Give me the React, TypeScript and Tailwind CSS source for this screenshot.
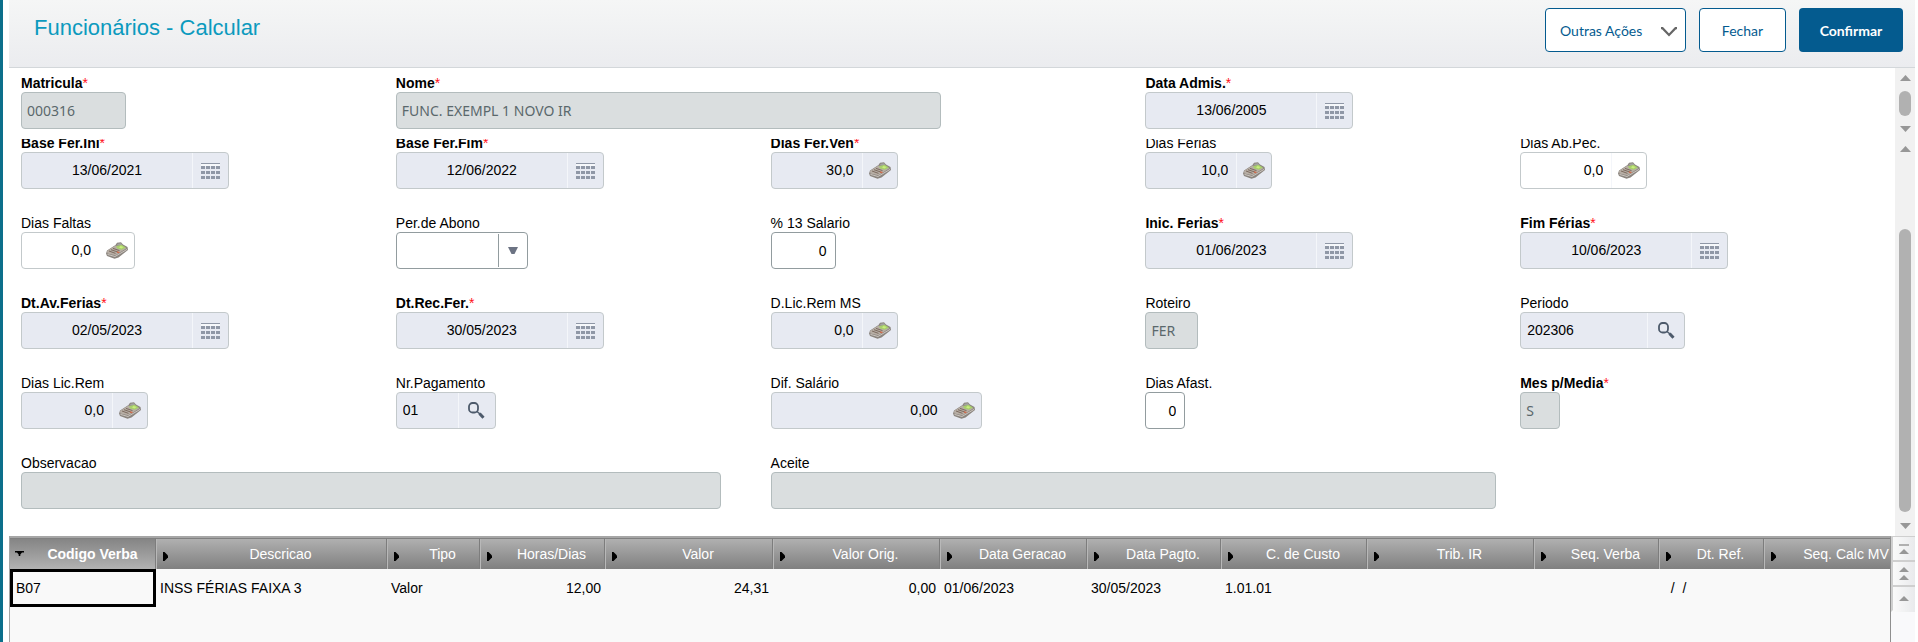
import type { ReactNode } from "react";
import clsx from "clsx";

type FieldProps = {
  id: string;
  label: string;
  required?: boolean;
  className?: string;
  children: ReactNode;
};

function Field({ id, label, required, className, children }: FieldProps) {
  return (
    <div className={className}>
      <label htmlFor={id} className={clsx("block h-5 leading-[22px] whitespace-nowrap", required && "font-bold")}>
        {label}
        {required && <span className="font-normal text-[#ff1018]">*</span>}
      </label>
      {children}
    </div>
  );
}

function CalendarIcon() {
  return (
    <svg width="19" height="16" viewBox="0 0 19 16" fill="#8f97a6" shapeRendering="crispEdges">
      <rect width="19" height="1" />
      <rect y="1" width="19" height="2" fill="#f6f8fb" />
      {[3, 8, 13].map((y) => [0, 5, 10, 15].map((x) => <rect key={`${x}-${y}`} x={x} y={y} width="4" height="3" />))}
    </svg>
  );
}

function CalculatorIcon() {
  return (
    <svg width="22" height="17" viewBox="0 0 22 17">
      <path d="M0 11.5 1 8.5 9.5 3 11 .8 15 .3 17 2.5 21.5 5 22 8 12.5 15.5 8.5 16.8 1 14z" fill="#8b857f" />
      <path d="M1 9 9.5 3.5 20.5 6.2 9.5 13.3 1.5 11.5z" fill="#b7aea5" />
      <path d="M11.5 1.8 15 1.3 16.5 3.2 11 3.6z" fill="#a3a3a1" />
      <path d="M10 4.2 15.5 2.8 20 5.6 15.8 7.8 11.2 6.4z" fill="#a9cf6c" />
      <path d="M14.5 4 17.5 5 15.5 6.4 13 5.6z" fill="#c8ef7c" />
      <path d="m3 9 6.5 2.4M5 7.7l7 2.4M7 6.4l6.5 2.2" stroke="#7c6a5e" strokeWidth="1" />
      <path d="m11 10 2.5.6" stroke="#cf6a4c" strokeWidth="1.4" />
      <path d="m1.5 12.4 7.5 2.1L21 7.4" stroke="#d2ccc5" strokeWidth=".9" fill="none" />
    </svg>
  );
}

function SearchIcon() {
  return (
    <svg width="17" height="17" viewBox="0 0 17 17" fill="none" stroke="#4d5a6b">
      <rect x="1" y="1" width="9" height="9.5" rx="3.6" strokeWidth="1.8" />
      <path d="m9 9.5 3 2.5" strokeWidth="1.6" />
      <path d="m11.5 11.5 4 4.2" strokeWidth="3" />
    </svg>
  );
}

const box = "flex h-[37px] overflow-hidden rounded border border-[#c3c9cb]";

type InputProps = { id: string; value: string; width: string; white?: boolean; plain?: boolean };

function DateInput({ id, value }: { id: string; value: string }) {
  return (
    <div className={clsx(box, "w-[208px] bg-[#e7eaf2]")}>
      <input id={id} defaultValue={value} className="min-w-0 flex-1 text-center outline-none" />
      <button aria-label="Calendário" className="flex w-9 items-center justify-center border-l border-[#f4f6fa]">
        <CalendarIcon />
      </button>
    </div>
  );
}

function NumberInput({ id, value, width, white, plain }: InputProps) {
  return (
    <div className={clsx(box, width, white ? "bg-white" : "bg-[#e7eaf2]")}>
      <input id={id} defaultValue={value} className="min-w-0 flex-1 pr-2 text-right outline-none" />
      <button
        aria-label="Calculadora"
        className={clsx("flex w-[35px] items-center justify-center border-l", plain ? "border-transparent" : "border-[#f4f6fa]")}
      >
        <CalculatorIcon />
      </button>
    </div>
  );
}

function LookupInput({ id, value, width }: InputProps) {
  return (
    <div className={clsx(box, width, "bg-[#e7eaf2]")}>
      <input id={id} defaultValue={value} className="min-w-0 flex-1 pl-1.5 outline-none" />
      <button aria-label="Pesquisar" className="flex w-[37px] items-center justify-center border-l border-[#f4f6fa]">
        <SearchIcon />
      </button>
    </div>
  );
}

function DisabledInput({ id, value, width }: InputProps) {
  return (
    <input
      id={id}
      disabled
      value={value}
      className={clsx(
        "block h-[37px] rounded border border-[#b3bcbd] bg-[#dadedf] px-[5px] font-['Noto_Sans',sans-serif] text-[#5a686c]",
        width
      )}
    />
  );
}

function TextInput({ id, value, width }: InputProps) {
  return (
    <input
      id={id}
      defaultValue={value}
      className={clsx("block h-[37px] rounded border border-[#929c9f] bg-white px-2 text-right outline-none", width)}
    />
  );
}

function Triangle({ down, small }: { down?: boolean; small?: boolean }) {
  return (
    <svg width={small ? 10 : 11} height={small ? 5 : 6} viewBox="0 0 10 6" preserveAspectRatio="none" fill="#979797">
      <path d={down ? "M0 0h10L5 6z" : "M0 6h10L5 0z"} />
    </svg>
  );
}

function Scrollbar({ track }: { track: string }) {
  return (
    <div className="flex w-5 shrink-0 flex-col bg-[#f1f1f1]">
      <button aria-label="Rolar para cima" className="flex h-5 items-center justify-center">
        <Triangle />
      </button>
      <div className={clsx("flex flex-1 justify-center", track)}>
        <div className="w-3 rounded-md bg-[#b1b1b1]" />
      </div>
      <button aria-label="Rolar para baixo" className="flex h-5 items-center justify-center">
        <Triangle down />
      </button>
    </div>
  );
}

const columns = [
  { title: "Codigo Verba", value: "B07", width: "w-[146px]" },
  { title: "Descricao", value: "INSS FÉRIAS FAIXA 3", width: "w-[231px]" },
  { title: "Tipo", value: "Valor", width: "w-[93px]" },
  { title: "Horas/Dias", value: "12,00", width: "w-[125px]", right: true },
  { title: "Valor", value: "24,31", width: "w-[168px]", right: true },
  { title: "Valor Orig.", value: "0,00", width: "w-[167px]", right: true },
  { title: "Data Geracao", value: "01/06/2023", width: "w-[147px]" },
  { title: "Data Pagto.", value: "30/05/2023", width: "w-[134px]" },
  { title: "C. de Custo", value: "1.01.01", width: "w-[146px]" },
  { title: "Trib. IR", value: "", width: "w-[167px]" },
  { title: "Seq. Verba", value: "", width: "w-[125px]" },
  { title: "Dt. Ref.", value: "  /  /", width: "w-[105px]" },
  { title: "Seq. Calc MV", value: "", width: "w-[146px]" },
];

function Grid() {
  return (
    <div className="min-w-0 flex-1 overflow-hidden border-t-2 border-r border-l border-t-[#a6a6a6] border-r-[#8f8f8f] border-l-[#a6a6a6] bg-[#f9f9f9]">
      <table className="w-max table-fixed border-separate border-spacing-0">
        <thead>
          <tr className="text-white">
            {columns.map((c, i) => (
              <th
                key={c.title}
                className={clsx(
                  "border-t border-t-[#808080] border-r border-r-[#7d7d7d] bg-linear-to-b p-0",
                  i === 0 ? "from-[#858585] to-[#b2b2b2] font-bold" : "from-[#b0b0b0] to-[#808080] font-normal",
                  c.width
                )}
              >
                <div className={clsx("flex h-[30px] items-center pl-[5px]", i > 0 && "border-l border-[#b8b8b8]")}>
                  {i === 0 ? (
                    <svg width="9" height="6" viewBox="0 0 9 6">
                      <path d="M0 0h9v1.6H7L5.3 3.5V5H3.7V3.5L2 1.6H0z" />
                    </svg>
                  ) : (
                    <svg width="7" height="9" viewBox="0 0 7 9" className="mt-1">
                      <path d="M1 0h1.5L6 3.6v1.8L2.5 9H1z" />
                    </svg>
                  )}
                  <span className="flex-1 pl-1.5 text-center whitespace-nowrap">{c.title}</span>
                </div>
              </th>
            ))}
          </tr>
        </thead>
        <tbody>
          <tr>
            {columns.map((c, i) => (
              <td key={c.title} className="p-0">
                <div
                  className={clsx(
                    "flex h-[38px] items-center whitespace-pre",
                    i === 0 ? "border-[3px] border-black pl-[3px]" : "px-1",
                    c.right && "justify-end"
                  )}
                >
                  {c.value}
                </div>
              </td>
            ))}
          </tr>
        </tbody>
      </table>
    </div>
  );
}

const navButton =
  "flex h-[25px] flex-col items-center justify-center gap-[3px] border-b-2 border-l-2 border-[#cfcfcf] bg-linear-to-r from-[#fafafa] to-[#e9eaec]";

export default function App() {
  return (
    <div className="flex min-h-screen flex-col border-l-[3px] border-[#0c6f8b] bg-white pr-[3px] pl-1.5 font-['Liberation_Sans',Arial,sans-serif] text-[14px] text-black">
      <header className="flex h-[68px] items-start border-b border-[#d3d7da] bg-linear-to-b from-[#f5f6f6] to-[#ebecef] pt-2 pr-3 pl-[25px]">
        <h1 className="flex-1 pt-1 text-[22px] leading-[32px] text-[#0c9abe]">Funcionários - Calcular</h1>
        <div className="flex gap-[13px] font-[Lato,sans-serif] text-[#045b8f]">
          <button className="flex h-11 w-[141px] items-center justify-between rounded border border-[#045b8f] bg-white pr-[7px] pl-3.5 whitespace-nowrap">
            Outras Ações
            <svg width="18" height="10" viewBox="0 0 18 10" fill="none" stroke="#666" strokeWidth="2.2" className="mt-1">
              <path d="M1 1.2h1.5L9 8l6.500-6.800H17" />
            </svg>
          </button>
          <button className="h-11 w-[87px] rounded border border-[#045b8f] bg-white">Fechar</button>
          <button className="h-11 w-[104px] rounded bg-[#045b8f] font-bold text-white">Confirmar</button>
        </div>
      </header>

      <section className="flex">
        <div className="grid flex-1 grid-cols-5 pt-1 pb-2.5 pl-3">
          <Field id="matricula" label="Matricula" required>
            <DisabledInput id="matricula" value="000316" width="w-[105px]" />
          </Field>
          <Field id="nome" label="Nome" required className="col-span-2">
            <DisabledInput id="nome" value="FUNC. EXEMPL 1 NOVO IR" width="w-[545px]" />
          </Field>
          <Field id="admissao" label="Data Admis." required>
            <DateInput id="admissao" value="13/06/2005" />
          </Field>
        </div>
        <Scrollbar track="py-[3px]" />
      </section>

      <section className="flex overflow-hidden">
        <div className="-mt-[7px] grid flex-1 grid-cols-5 gap-y-[23px] pb-[27px] pl-3">
          <Field id="baseIni" label="Base Fer.Ini" required>
            <DateInput id="baseIni" value="13/06/2021" />
          </Field>
          <Field id="baseFim" label="Base Fer.Fim" required>
            <DateInput id="baseFim" value="12/06/2022" />
          </Field>
          <Field id="diasVen" label="Dias Fer.Ven" required>
            <NumberInput id="diasVen" value="30,0" width="w-[127px]" />
          </Field>
          <Field id="diasFerias" label="Dias Ferias">
            <NumberInput id="diasFerias" value="10,0" width="w-[127px]" />
          </Field>
          <Field id="diasAbono" label="Dias Ab.Pec.">
            <NumberInput id="diasAbono" value="0,0" width="w-[127px]" white />
          </Field>

          <Field id="diasFaltas" label="Dias Faltas">
            <NumberInput id="diasFaltas" value="0,0" width="w-[114px]" white plain />
          </Field>
          <Field id="perAbono" label="Per.de Abono">
            <div className="flex h-[37px] w-[132px] rounded border border-[#929c9f] bg-white">
              <select id="perAbono" className="min-w-0 flex-1 appearance-none pl-1.5 outline-none">
                <option></option>
              </select>
              <span className="pointer-events-none my-px flex w-[29px] items-center justify-center border-l border-[#929c9f]">
                <svg width="10" height="7" viewBox="0 0 10 7" fill="#6c7383">
                  <path d="M0 0h10L6.5 7h-3z" />
                </svg>
              </span>
            </div>
          </Field>
          <Field id="decimo" label="% 13 Salario">
            <TextInput id="decimo" value="0" width="w-[65px]" />
          </Field>
          <Field id="iniFerias" label="Inic. Ferias" required>
            <DateInput id="iniFerias" value="01/06/2023" />
          </Field>
          <Field id="fimFerias" label="Fim Férias" required>
            <DateInput id="fimFerias" value="10/06/2023" />
          </Field>

          <Field id="avisoFerias" label="Dt.Av.Ferias" required>
            <DateInput id="avisoFerias" value="02/05/2023" />
          </Field>
          <Field id="reciboFerias" label="Dt.Rec.Fer." required>
            <DateInput id="reciboFerias" value="30/05/2023" />
          </Field>
          <Field id="licMs" label="D.Lic.Rem MS">
            <NumberInput id="licMs" value="0,0" width="w-[127px]" />
          </Field>
          <Field id="roteiro" label="Roteiro">
            <DisabledInput id="roteiro" value="FER" width="w-[53px]" />
          </Field>
          <Field id="periodo" label="Periodo">
            <LookupInput id="periodo" value="202306" width="w-[165px]" />
          </Field>

          <Field id="diasLic" label="Dias Lic.Rem">
            <NumberInput id="diasLic" value="0,0" width="w-[127px]" />
          </Field>
          <Field id="pagamento" label="Nr.Pagamento">
            <LookupInput id="pagamento" value="01" width="w-[100px]" />
          </Field>
          <Field id="difSalario" label="Dif. Salário">
            <NumberInput id="difSalario" value="0,00" width="w-[211px]" plain />
          </Field>
          <Field id="diasAfast" label="Dias Afast.">
            <TextInput id="diasAfast" value="0" width="w-10" />
          </Field>
          <Field id="mesMedia" label="Mes p/Media" required>
            <DisabledInput id="mesMedia" value="S" width="w-10" />
          </Field>

          <Field id="observacao" label="Observacao" className="col-span-2">
            <DisabledInput id="observacao" value="" width="w-[700px]" />
          </Field>
          <Field id="aceite" label="Aceite" className="col-span-3">
            <DisabledInput id="aceite" value="" width="w-[725px]" />
          </Field>
        </div>
        <Scrollbar track="pt-[70px] pb-1" />
      </section>

      <section className="flex flex-1">
        <Grid />
        <nav className="flex w-6 shrink-0 flex-col border-t border-[#cfcfcf] bg-[#f9f9fb]">
          <button aria-label="Primeiro registro" className={navButton}>
            <span className="h-0.5 w-2.5 bg-[#b0b0b0]" />
            <Triangle small />
          </button>
          <button aria-label="Página anterior" className={navButton}>
            <Triangle small />
            <Triangle small />
          </button>
          <button aria-label="Registro anterior" className={clsx(navButton, "border-b-transparent")}>
            <Triangle small />
          </button>
        </nav>
      </section>
    </div>
  );
}
